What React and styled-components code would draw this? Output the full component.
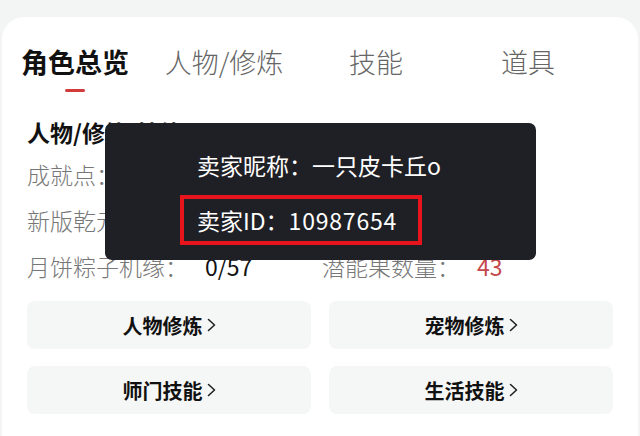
import React from "react";
import styled, { createGlobalStyle } from "styled-components";

const Global = createGlobalStyle`
  html, body { margin: 0; padding: 0; background: #f3f4f4; overflow: hidden; }
  body { font-family: "Noto Sans CJK SC", "Noto Sans", sans-serif; }
`;

const Card = styled.div`
  position: relative;
  margin: 17px 2px 0;
  min-height: 419px;
  background: #fff;
  border-radius: 22px 22px 0 0;
  padding-top: 27px;
  box-sizing: border-box;
`;

const Tabs = styled.div`
  display: grid;
  grid-template-columns: 146px repeat(3, 152px);
  margin-bottom: 25px;
`;

const Tab = styled.div`
  display: flex;
  flex-direction: column;
  align-items: center;
  font-size: 27px;
  line-height: 36px;
  font-weight: ${(p) => (p.$active ? 700 : 300)};
  color: ${(p) => (p.$active ? "#111" : "#666")};
  white-space: nowrap;
`;

const Indicator = styled.div`
  width: 20px;
  height: 3px;
  margin-top: 9px;
  border-radius: 1.5px;
  background: ${(p) => (p.$show ? "#d23b3b" : "transparent")};
`;

const Body = styled.div`
  padding: 0 25px;
`;

const SectionTitle = styled.div`
  font-size: 23px;
  line-height: 30px;
  font-weight: 700;
  color: #111;
  margin-bottom: 12px;
`;

const InfoGrid = styled.div`
  display: grid;
  grid-template-columns: 295px 1fr;
  row-gap: 16px;
  margin-bottom: 20px;
`;

const Info = styled.div`
  display: flex;
  align-items: center;
  font-size: 23px;
  line-height: 30px;
  font-weight: 300;
  white-space: nowrap;
`;

const Label = styled.span`
  color: #777;
`;

const Value = styled.span`
  margin-left: 17px;
  font-weight: 400;
  color: ${(p) => (p.$red ? "#c4474b" : "#111")};
`;

const Buttons = styled.div`
  display: grid;
  grid-template-columns: 1fr 1fr;
  column-gap: 18px;
  row-gap: 17px;
`;

const Btn = styled.div`
  height: 48px;
  border-radius: 8px;
  background: #f5f6f6;
  display: flex;
  align-items: center;
  justify-content: center;
  gap: 4px;
  font-size: 20px;
  font-weight: 700;
  color: #111;
`;

const Tooltip = styled.div`
  position: absolute;
  left: 103px;
  top: 106px;
  width: 431px;
  height: 137px;
  box-sizing: border-box;
  background: #1f2026;
  border-radius: 7px;
  padding: 27px 0 0 75px;
  display: flex;
  flex-direction: column;
  align-items: flex-start;
  gap: 15px;
  color: #fff;
  font-size: 23px;
  line-height: 30px;
  white-space: nowrap;
`;

const TipLine = styled.div`
  padding: 0 17px;
`;

const Highlight = styled.div`
  width: 242px;
  height: 50px;
  box-sizing: border-box;
  border: 4px solid #e8141b;
  padding: 0 13px;
  display: flex;
  align-items: center;
`;

const Digits = styled.span`
  letter-spacing: 0.8px;
`;

const Chevron = () => (
  <svg width="9" height="14" viewBox="0 0 9 14" fill="none">
    <polyline points="1.5,1.5 7.5,7 1.5,12.5" stroke="#222" strokeWidth="1.6" strokeLinecap="round" strokeLinejoin="round" />
  </svg>
);

const tabs = ["角色总览", "人物/修炼", "技能", "道具"];
const infos = [
  { label: "成就点：", value: "2680" },
  { label: "新版乾元丹：", value: "9" },
  { label: "新版乾元丹：", value: "0/9" },
  { label: "回梦丹：", value: "0" },
  { label: "月饼粽子机缘：", value: "0/57" },
  { label: "潜能果数量：", value: "43", red: true },
];
const buttons = ["人物修炼", "宠物修炼", "师门技能", "生活技能"];

export default function App() {
  return (
    <>
      <Global />
      <Card>
        <Tabs>
          {tabs.map((t, i) => (
            <Tab key={t} $active={i === 0}>
              {t}
              <Indicator $show={i === 0} />
            </Tab>
          ))}
        </Tabs>
        <Body>
          <SectionTitle>人物/修炼/技能</SectionTitle>
          <InfoGrid>
            {infos.map((it, i) => (
              <Info key={i}>
                <Label>{it.label}</Label>
                <Value $red={it.red}>{it.value}</Value>
              </Info>
            ))}
          </InfoGrid>
          <Buttons>
            {buttons.map((b) => (
              <Btn key={b}>
                {b}
                <Chevron />
              </Btn>
            ))}
          </Buttons>
        </Body>
        <Tooltip>
          <TipLine>卖家昵称：一只皮卡丘o</TipLine>
          <Highlight>
            卖家ID：<Digits>10987654</Digits>
          </Highlight>
        </Tooltip>
      </Card>
    </>
  );
}
